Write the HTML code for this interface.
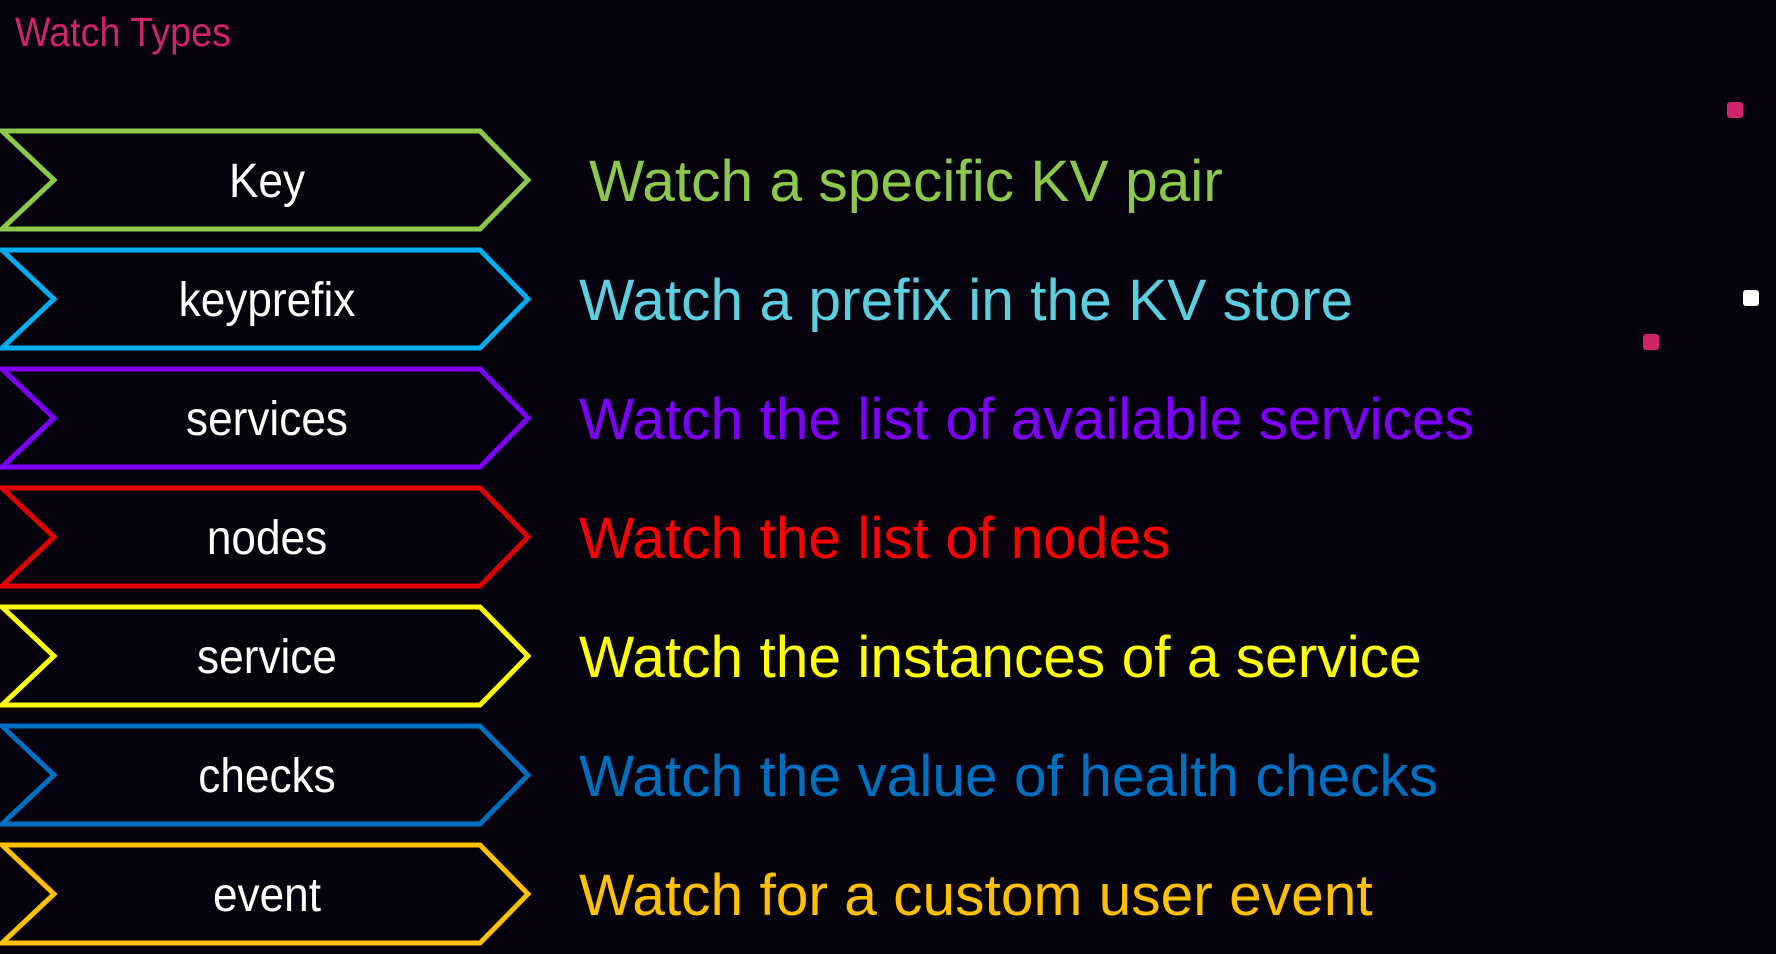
<!DOCTYPE html>
<html><head><meta charset="utf-8"><style>
html,body{margin:0;padding:0;background:#05020d;width:1776px;height:954px;overflow:hidden;position:relative;font-family:"Liberation Sans",Arial,sans-serif}
svg{position:absolute;left:0;top:0}
.t{position:absolute;left:15px;top:10px;color:#d0246c;font-size:41px;line-height:44px;transform:scaleX(0.92);transform-origin:left}
.l{position:absolute;left:67px;width:400px;text-align:center;color:#fff;font-size:48px;line-height:102px;height:102px;letter-spacing:0px;transform:scaleX(0.92);top:0}
.d{position:absolute;font-size:58.7px;line-height:102px;height:102px;white-space:nowrap}
.sq{position:absolute;width:16px;height:16px;border-radius:3px}
</style></head><body>
<div class="t">Watch Types</div>
<svg width="1776" height="954">
<g fill="#05020d" stroke-width="5" stroke-linejoin="miter">
<path d="M2 131 L480 131 L528 180 L480 229 L2 229 L54 180 Z" stroke="#8cc84b"/>
<path d="M2 250 L480 250 L528 299 L480 348 L2 348 L54 299 Z" stroke="#00aeef"/>
<path d="M2 369 L480 369 L528 418 L480 467 L2 467 L54 418 Z" stroke="#7f00ff"/>
<path d="M2 488 L480 488 L528 537 L480 586 L2 586 L54 537 Z" stroke="#e00000"/>
<path d="M2 607 L480 607 L528 656 L480 705 L2 705 L54 656 Z" stroke="#ffff00"/>
<path d="M2 726 L480 726 L528 775 L480 824 L2 824 L54 775 Z" stroke="#0070c0"/>
<path d="M2 845 L480 845 L528 894 L480 943 L2 943 L54 894 Z" stroke="#ffc000"/>
</g></svg>
<div class="l" style="top:131px">Key</div>
<div class="l" style="top:250px">keyprefix</div>
<div class="l" style="top:369px">services</div>
<div class="l" style="top:488px">nodes</div>
<div class="l" style="top:607px">service</div>
<div class="l" style="top:726px">checks</div>
<div class="l" style="top:845px">event</div>
<div class="d" style="top:131px;left:589px;color:#8cc84b">Watch a specific KV pair</div>
<div class="d" style="top:250px;left:579px;color:#5bcfe0">Watch a prefix in the KV store</div>
<div class="d" style="top:369px;left:579px;color:#7f00ff">Watch the list of available services</div>
<div class="d" style="top:488px;left:579px;color:#ff0000">Watch the list of nodes</div>
<div class="d" style="top:607px;left:579px;color:#ffff00">Watch the instances of a service</div>
<div class="d" style="top:726px;left:579px;color:#0070c0">Watch the value of health checks</div>
<div class="d" style="top:845px;left:579px;color:#ffc000">Watch for a custom user event</div>
<div class="sq" style="left:1727px;top:102px;background:#d0246c"></div>
<div class="sq" style="left:1743px;top:290px;background:#fff"></div>
<div class="sq" style="left:1643px;top:334px;background:#d0246c"></div>
</body></html>
